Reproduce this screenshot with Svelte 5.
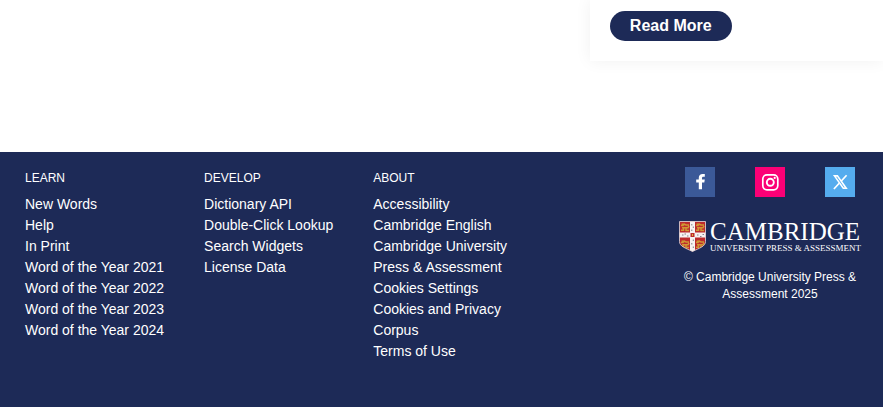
<script>
  const columns = [
    {
      title: 'LEARN',
      links: ['New Words', 'Help', 'In Print', 'Word of the Year 2021', 'Word of the Year 2022', 'Word of the Year 2023', 'Word of the Year 2024'],
    },
    {
      title: 'DEVELOP',
      links: ['Dictionary API', 'Double-Click Lookup', 'Search Widgets', 'License Data'],
    },
    {
      title: 'ABOUT',
      links: ['Accessibility', 'Cambridge English', 'Cambridge University Press & Assessment', 'Cookies Settings', 'Cookies and Privacy', 'Corpus', 'Terms of Use'],
    },
  ];
  const lions = [[2, 2], [17, 2], [2, 19], [17, 19]];
</script>

<div class="page">
  <main>
    <article class="card">
      <a class="more" href="#read">Read More</a>
    </article>
  </main>

  <footer>
    <nav aria-label="Footer">
      {#each columns as column}
        <section>
          <h2>{column.title}</h2>
          <ul>
            {#each column.links as link}
              <li><a href="#footer">{link}</a></li>
            {/each}
          </ul>
        </section>
      {/each}
    </nav>

    <aside>
      <div class="social">
        <a class="facebook" href="#facebook" aria-label="Facebook">
          <svg viewBox="0 0 30 30"><path fill="#fff" d="M13.800 22.300v-6.800h-2.600v-3h2.600v-1.700c0-2.500 1.500-3.900 3.800-3.900.9 0 1.700.1 2.200.2v2.700h-1.400c-1.100 0-1.400.6-1.400 1.400v1.300h2.800l-.5 3H17v6.800z" /></svg>
        </a>
        <a class="instagram" href="#instagram" aria-label="Instagram">
          <svg viewBox="0 0 30 30" fill="none" stroke="#fff">
            <rect x="7.800" y="7.800" width="15" height="15" rx="4.200" stroke-width="1.700" />
            <circle cx="15.300" cy="15.300" r="3.500" stroke-width="1.900" />
            <circle cx="19.700" cy="10.900" r="1.100" fill="#fff" stroke="none" />
          </svg>
        </a>
        <a class="x" href="#x" aria-label="X">
          <svg viewBox="0 0 30 30">
            <path fill="none" stroke="#fff" stroke-width="1.600" d="M9.500 8.900h2.900l8.800 12.300h-2.900z" />
            <path fill="none" stroke="#fff" stroke-width="1.700" d="M21.600 8.200 16.300 14M14.200 16.200 8.900 22" />
          </svg>
        </a>
      </div>

      <a class="logo" href="#cambridge">
        <svg class="crest" viewBox="0 0 27 31" aria-hidden="true">
          <defs><clipPath id="shield"><path d="M.5.500h26v20c0 5-6 6.500-13 10-7-3.500-13-5-13-10z" /></clipPath></defs>
          <g clip-path="url(#shield)">
            <path fill="#bd2a2c" d="M0 0h27v31H0z" />
            {#each lions as [x, y]}
              <g transform="translate({x} {y})" fill="none" stroke="#cf9733" stroke-width="1.500">
                <path d="M0 2.500h2l1-1.500 2 1h3M1 4.800h6l1-2M0 7.200h2.500V5M5 5.200v2.300h3M1 .5l1 2" />
              </g>
            {/each}
            <path fill="#f7f2f2" d="M11 0h5v31h-5zM0 11.500h27v5H0z" />
            <path stroke="#77747b" stroke-width=".9" fill="none" d="M12.800 3v1.500m1.500 1V7m-1.500 1.500V10m1.500 8.500V20m-1.500 2v1.500m1.500 2V27M3 14h1.500m1-1H7m1 2h1.500m8.500-1h1.500m1.500 1.500h1.500m1-2h1.500" />
            <path fill="#bd2a2c" d="M11.500 12h4v4h-4z" />
            <path fill="#e0b03c" d="M13 13h1v2h-1z" />
          </g>
          <path fill="none" stroke="#e6dcdd" stroke-width=".8" d="M.5.500h26v20c0 5-6 6.500-13 10-7-3.500-13-5-13-10z" />
        </svg>
        <span class="wordmark">
          <span class="name">CAMBRIDGE</span>
          <span class="sub">UNIVERSITY PRESS &amp; ASSESSMENT</span>
        </span>
      </a>

      <p>© Cambridge University Press &amp; Assessment 2025</p>
    </aside>
  </footer>
</div>

<style>
  :global(body) {
    margin: 0;
    background: #fff;
  }
  .page {
    display: flex;
    flex-direction: column;
    min-height: 100vh;
    overflow: hidden;
    font-family: Arial, "Liberation Sans", sans-serif;
    color: #fff;
  }
  a {
    color: inherit;
    text-decoration: none;
  }
  main {
    display: flex;
    justify-content: flex-end;
    padding-bottom: 91px;
  }
  .card {
    box-sizing: border-box;
    width: 33.200%;
    padding: 11px 20px 20px;
    background: #fff;
    box-shadow: 0 0 16px rgba(0, 0, 0, 0.06);
  }
  .more {
    display: inline-block;
    padding: 0 20px;
    border-radius: 15px;
    background: #1d2a57;
    font-size: 16px;
    font-weight: 700;
    line-height: 30px;
    vertical-align: top;
  }
  footer {
    flex: 1;
    display: flex;
    justify-content: space-between;
    padding: 15px 22px 40px 25px;
    background: #1d2a57;
  }
  nav {
    display: flex;
    gap: 40px;
  }
  section {
    max-width: 140px;
  }
  h2 {
    margin: 0 0 4px;
    font-size: 12px;
    font-weight: 400;
    line-height: 23px;
  }
  ul {
    margin: 0;
    padding: 0;
    list-style: none;
  }
  li {
    font-size: 14px;
    line-height: 21px;
  }
  aside {
    width: 182px;
  }
  .social {
    display: flex;
    justify-content: center;
    gap: 40px;
  }
  .social a {
    width: 30px;
    height: 30px;
  }
  .social svg {
    display: block;
  }
  .facebook {
    background: #3b5998;
  }
  .instagram {
    background: #fb0076;
  }
  .x {
    background: #55acee;
  }
  .logo {
    display: flex;
    gap: 4px;
    margin-top: 24px;
    font-family: "Liberation Serif", "Times New Roman", serif;
    white-space: nowrap;
  }
  .crest {
    flex: none;
    width: 27px;
    height: 31px;
  }
  .name,
  .sub {
    display: block;
  }
  .name {
    font-size: 25px;
    line-height: 22px;
  }
  .sub {
    font-size: 9px;
    line-height: 10px;
  }
  p {
    margin: 16px 0 0;
    font-size: 12px;
    line-height: 17px;
    text-align: center;
  }
</style>
